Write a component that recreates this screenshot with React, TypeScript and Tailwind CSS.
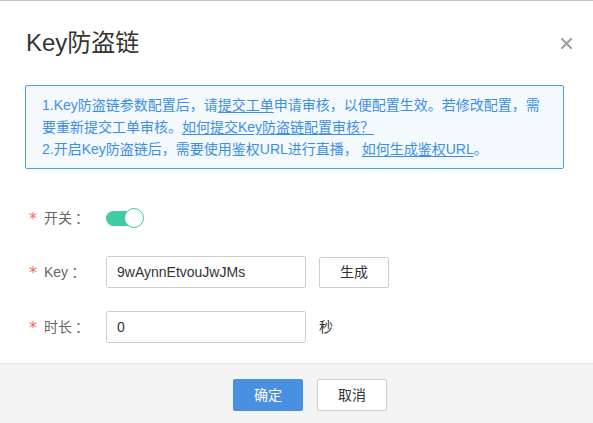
import React from "react";

const font = { fontFamily: '"Liberation Sans", "Noto Sans CJK SC", sans-serif' };

function Label({ text }: { text: string }) {
  return (
    <div className="w-[106px] shrink-0 whitespace-nowrap pl-[29px] flex items-center text-[14px] text-[#666]">
      <span className="shrink-0 text-[#f26b5b] w-[15px] text-[16px] leading-[16px] h-[16px] pt-[1px] font-['DejaVu_Sans',sans-serif]">*</span>
      <span className="shrink-0">{text}</span>
      <span className="shrink-0 ml-[3px]">：</span>
    </div>
  );
}

export default function App() {
  return (
    <div
      className="w-[593px] h-[423px] bg-white border-t border-[#c8c8c8] flex flex-col"
      style={font}
    >
      <div className="flex items-center pt-[26px] pl-[26px] pr-[21px]">
        <div className="text-[24px] leading-[32px] text-[#333]">Key防盗链</div>
        <svg className="ml-auto" width="11" height="11" viewBox="0 0 11 11">
          <path d="M1 1 L10 10 M10 1 L1 10" stroke="#a0a0a0" strokeWidth="2.2" strokeLinecap="square" />
        </svg>
      </div>

      <div className="mt-[26px] ml-[25px] w-[539px] border border-[#4a9ff0] rounded-[2px] bg-[#f4f9fe] pl-[16px] pr-[10px] pt-[8px] pb-[8px] text-[14px] leading-[22px] text-[#3d8fe6] whitespace-nowrap">
        <div>
          1.Key防盗链参数配置后，请<span className="underline underline-offset-2">提交工单</span>申请审核，以便配置生效。若修改配置，需
        </div>
        <div>
          要重新提交工单审核。<span className="underline underline-offset-2">如何提交Key防盗链配置审核？</span>
        </div>
        <div>
          2.开启Key防盗链后，需要使用鉴权URL进行直播， <span className="underline underline-offset-2">如何生成鉴权URL</span>。
        </div>
      </div>

      <div className="mt-[33px] flex flex-col gap-[22px]">
        <div className="flex h-[32px] items-center">
          <Label text="开关" />
          <div className="relative w-[38px] h-[20px]">
            <div className="absolute left-0 top-[3px] w-[34px] h-[15px] rounded-full bg-[#3fcca2]" />
            <div className="absolute right-0 top-0 w-[20px] h-[20px] rounded-full bg-white border border-[#3fcca2]" />
          </div>
        </div>
        <div className="flex h-[32px] items-center">
          <Label text="Key" />
          <div className="w-[200px] h-[32px] border border-[#cfcfcf] rounded-[2px] flex items-center pl-[10px] text-[14px] text-[#333]">
            9wAynnEtvouJwJMs
          </div>
          <div className="ml-[13px] w-[70px] h-[31px] border border-[#cfcfcf] rounded-[2px] flex items-center justify-center text-[14px] text-[#333]">
            生成
          </div>
        </div>
        <div className="flex h-[32px] items-center mt-[1px]">
          <Label text="时长" />
          <div className="w-[200px] h-[32px] border border-[#cfcfcf] rounded-[2px] flex items-center pl-[10px] text-[14px] text-[#333]">
            0
          </div>
          <div className="ml-[13px] text-[14px] text-[#333]">秒</div>
        </div>
      </div>

      <div className="mt-auto h-[60px] border-t border-[#e8e8e8] bg-[#f4f4f4] flex justify-center items-start pt-[15px] pl-[27px] gap-[14px]">
        <div className="w-[70px] h-[32px] rounded-[2px] bg-[#4a90e2] text-white text-[14px] flex items-center justify-center">
          确定
        </div>
        <div className="w-[70px] h-[32px] rounded-[2px] bg-white border border-[#cfcfcf] text-[#333] text-[14px] flex items-center justify-center">
          取消
        </div>
      </div>
    </div>
  );
}
